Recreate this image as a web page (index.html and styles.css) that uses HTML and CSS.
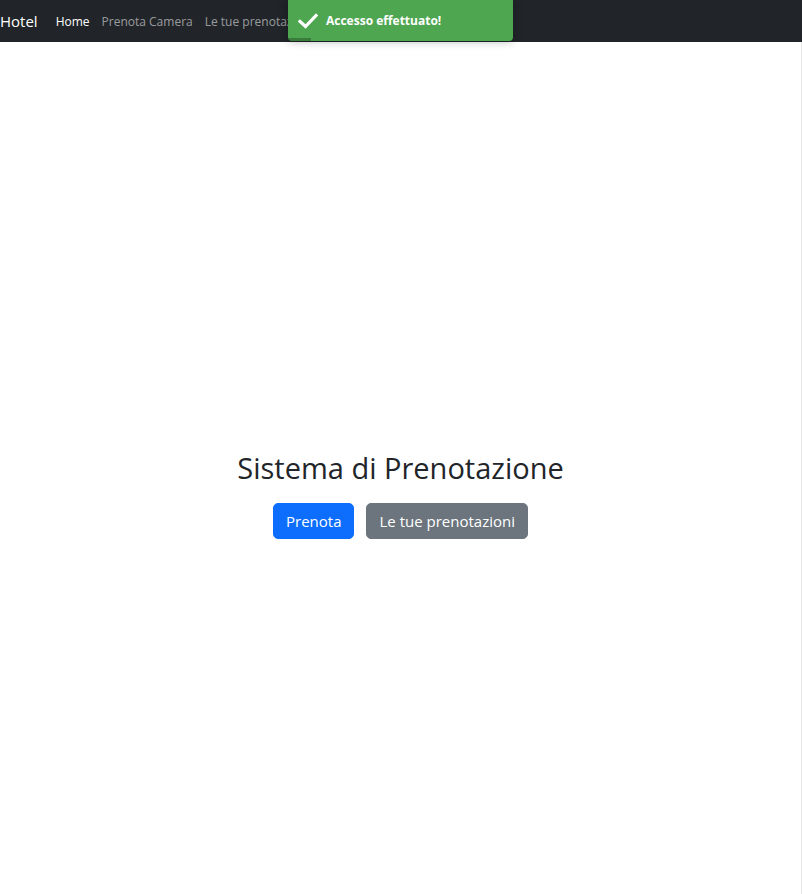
FILE: index.html
```html
<!DOCTYPE html>
<html lang="it">
<head>
<meta charset="utf-8">
<title>Hotel</title>
<link rel="stylesheet" href="styles.css">
</head>
<body>
<nav class="navbar">
  <a class="brand" href="#">Hotel</a>
  <ul class="nav">
    <li><a class="nav-link active" href="#">Home</a></li>
    <li><a class="nav-link" href="#">Prenota Camera</a></li>
    <li><a class="nav-link" href="#">Le tue prenotazioni</a></li>
  </ul>
</nav>
<main class="main">
  <div class="hero">
    <h1 class="title">Sistema di Prenotazione</h1>
    <div class="actions">
      <a class="btn btn-primary" href="#">Prenota</a>
      <a class="btn btn-secondary" href="#">Le tue prenotazioni</a>
    </div>
  </div>
</main>
<div class="toast">
  <svg class="toast-icon" viewBox="0 0 20 16" width="20" height="16" aria-hidden="true">
    <path d="M2 8.5 L7.5 13.5 L18 2.5" fill="none" stroke="#fff" stroke-width="3.2" stroke-linecap="square" stroke-linejoin="miter"/>
  </svg>
  <span class="toast-text">Accesso effettuato!</span>
  <div class="toast-progress"></div>
</div>
</body>
</html>
```
FILE: styles.css
```css
* { box-sizing: border-box; }
html, body { margin: 0; padding: 0; }
body {
  font-family: "Open Sans", "Noto Sans", sans-serif;
  color: #212529;
  background: #fff;
}
.navbar {
  height: 42px;
  background: #212529;
  display: flex;
  align-items: center;
}
.brand {
  color: #fff;
  text-decoration: none;
  font-size: 15px;
  margin-right: 12px;
}
.nav {
  list-style: none;
  margin: 0;
  padding: 0;
  display: flex;
}
.nav-link {
  display: block;
  padding: 0 6px;
  font-size: 12px;
  color: rgba(255,255,255,0.55);
  text-decoration: none;
}
.nav-link.active { color: #fff; }
.main {
  height: 852px;
  border-right: 1px solid #e6e6e6;
  display: flex;
  align-items: center;
  justify-content: center;
}
.hero {
  text-align: center;
  margin-top: 54px;
}
.title {
  margin: 0 0 17px;
  font-size: 29px;
  font-weight: 400;
  line-height: 1.2;
}
.actions {
  display: flex;
  justify-content: center;
  gap: 12px;
}
.btn {
  display: inline-block;
  padding: 6px 12px;
  font-size: 15px;
  line-height: 22px;
  border-radius: 5px;
  color: #fff;
  text-decoration: none;
  border: 1px solid transparent;
}
.btn-primary { background: #0d6efd; border-color: #0d6efd; }
.btn-secondary { background: #6c757d; border-color: #6c757d; }
.toast {
  position: absolute;
  top: 0;
  left: 288px;
  width: 225px;
  height: 41px;
  background: #4ea651;
  border-radius: 0 0 4px 4px;
  box-shadow: 0 0 10px rgba(0,0,0,0.3);
  display: flex;
  align-items: center;
  padding-left: 10px;
  overflow: hidden;
}
.toast-icon { margin-right: 8px; }
.toast-text {
  color: #fff;
  font-weight: 700;
  font-size: 12px;
}
.toast-progress {
  position: absolute;
  left: 0;
  bottom: 0;
  width: 23px;
  height: 3px;
  background: rgba(0,0,0,0.25);
}
```
